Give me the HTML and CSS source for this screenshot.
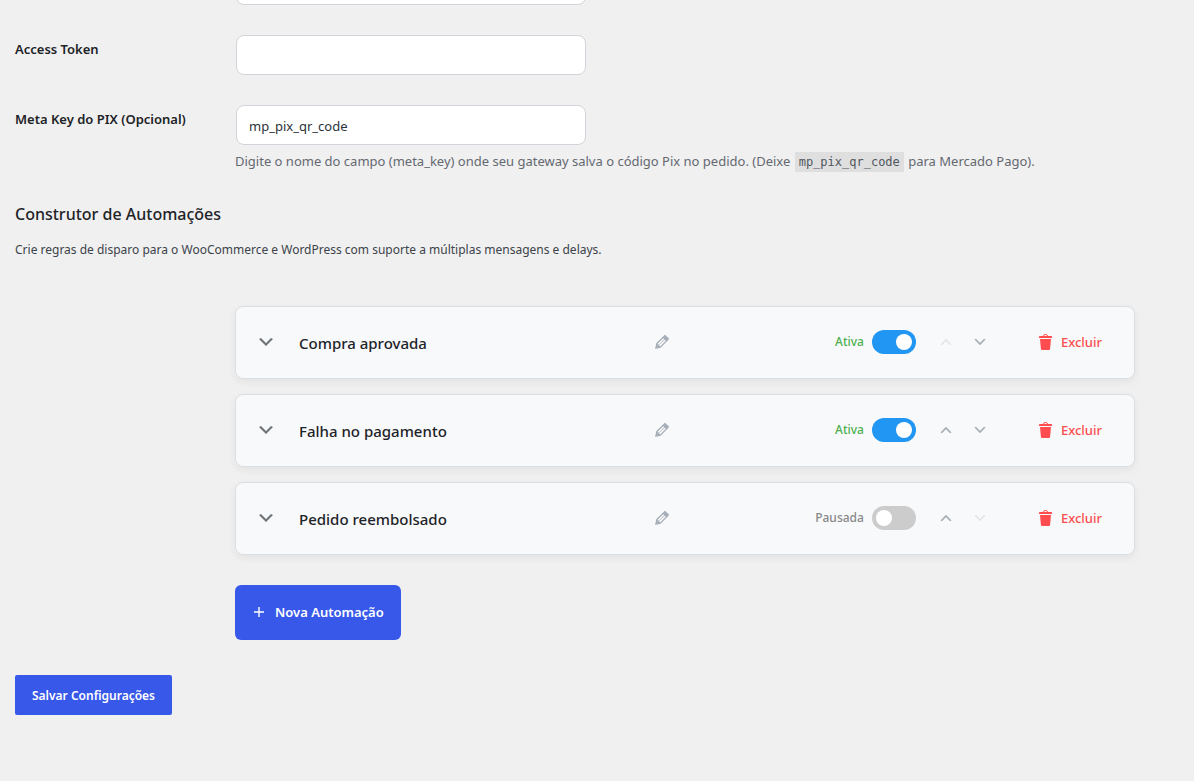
FILE: index.html
```html
<!DOCTYPE html>
<html lang="pt-BR">
<head>
    <meta charset="UTF-8">
    <meta name="viewport" content="width=device-width, initial-scale=1.0">
    <title>Configurações</title>
    <link rel="stylesheet" href="styles.css">
</head>
<body>

    <!-- Shared icons -->
    <svg class="icon-defs" aria-hidden="true">
        <symbol id="icon-down" viewBox="0 0 20 20">
            <path d="M5 6l5 5 5-5 2 1-7 7-7-7z"/>
        </symbol>
        <symbol id="icon-up" viewBox="0 0 20 20">
            <path d="M15 14l-5-5-5 5-2-1 7-7 7 7z"/>
        </symbol>
        <symbol id="icon-edit" viewBox="0 0 20 20">
            <path d="M13.89 3.39l2.71 2.72c.46.46.42 1.24.03 1.64l-8.01 8.02-5.56 1.16 1.16-5.58s7.6-7.63 7.99-8.03c.39-.39 1.22-.39 1.68.07zm-2.73 2.79l-5.59 5.61 1.11 1.11 5.54-5.65zm-2.97 8.23l5.58-5.6-1.07-1.08-5.59 5.6z"/>
        </symbol>
        <symbol id="icon-trash" viewBox="0 0 20 20">
            <path d="M12 4h3c.6 0 1 .4 1 1v1H3V5c0-.6.5-1 1-1h3c.2-1.1 1.3-2 2.5-2s2.300.9 2.500 2zM8 4h3c-.2-.6-.9-1-1.500-1S8.200 3.400 8 4zM4 7h11l-.9 10.100c0 .5-.5.9-1 .9H5.900c-.5 0-.9-.4-1-.9L4 7z"/>
        </symbol>
        <symbol id="icon-plus" viewBox="0 0 20 20">
            <path d="M9.300 5h1.400v4.300H15v1.400h-4.300V15H9.300v-4.300H5V9.300h4.300z"/>
        </symbol>
    </svg>

    <form class="settings">
        <div class="form-row">
            <span></span>
            <input class="text-input" type="text" aria-label="ID">
        </div>
        <div class="form-row">
            <label for="accessToken">Access Token</label>
            <input class="text-input" type="text" id="accessToken">
        </div>
        <div class="form-row">
            <label for="metaKey">Meta Key do PIX (Opcional)</label>
            <div>
                <input class="text-input" type="text" id="metaKey" value="mp_pix_qr_code">
                <p class="description">Digite o nome do campo (meta_key) onde seu gateway salva o código Pix no pedido. (Deixe <code>mp_pix_qr_code</code> para Mercado Pago).</p>
            </div>
        </div>

        <h2>Construtor de Automações</h2>
        <p class="intro">Crie regras de disparo para o WooCommerce e WordPress com suporte a múltiplas mensagens e delays.</p>

        <!-- Automations -->
        <div class="automations">
            <div class="card">
                <button type="button" class="icon-button toggle-card" aria-label="Expandir"><svg><use href="#icon-down"/></svg></button>
                <div class="card-name">
                    <h3>Compra aprovada</h3>
                    <button type="button" class="icon-button" aria-label="Editar nome"><svg><use href="#icon-edit"/></svg></button>
                </div>
                <div class="card-actions">
                    <label class="status active">Ativa <input type="checkbox" class="switch" checked></label>
                    <div class="order">
                        <button type="button" class="icon-button" aria-label="Mover para cima" disabled><svg><use href="#icon-up"/></svg></button>
                        <button type="button" class="icon-button" aria-label="Mover para baixo"><svg><use href="#icon-down"/></svg></button>
                    </div>
                    <button type="button" class="delete"><svg><use href="#icon-trash"/></svg>Excluir</button>
                </div>
            </div>

            <div class="card">
                <button type="button" class="icon-button toggle-card" aria-label="Expandir"><svg><use href="#icon-down"/></svg></button>
                <div class="card-name">
                    <h3>Falha no pagamento</h3>
                    <button type="button" class="icon-button" aria-label="Editar nome"><svg><use href="#icon-edit"/></svg></button>
                </div>
                <div class="card-actions">
                    <label class="status active">Ativa <input type="checkbox" class="switch" checked></label>
                    <div class="order">
                        <button type="button" class="icon-button" aria-label="Mover para cima"><svg><use href="#icon-up"/></svg></button>
                        <button type="button" class="icon-button" aria-label="Mover para baixo"><svg><use href="#icon-down"/></svg></button>
                    </div>
                    <button type="button" class="delete"><svg><use href="#icon-trash"/></svg>Excluir</button>
                </div>
            </div>

            <div class="card">
                <button type="button" class="icon-button toggle-card" aria-label="Expandir"><svg><use href="#icon-down"/></svg></button>
                <div class="card-name">
                    <h3>Pedido reembolsado</h3>
                    <button type="button" class="icon-button" aria-label="Editar nome"><svg><use href="#icon-edit"/></svg></button>
                </div>
                <div class="card-actions">
                    <label class="status">Pausada <input type="checkbox" class="switch"></label>
                    <div class="order">
                        <button type="button" class="icon-button" aria-label="Mover para cima"><svg><use href="#icon-up"/></svg></button>
                        <button type="button" class="icon-button" aria-label="Mover para baixo" disabled><svg><use href="#icon-down"/></svg></button>
                    </div>
                    <button type="button" class="delete"><svg><use href="#icon-trash"/></svg>Excluir</button>
                </div>
            </div>

            <button type="button" class="primary add-button"><svg><use href="#icon-plus"/></svg>Nova Automação</button>
        </div>

        <button type="submit" class="primary save-button">Salvar Configurações</button>
    </form>

</body>
</html>
```
FILE: styles.css
```css
* {
    box-sizing: border-box;
}

body {
    font-family: "Noto Sans", "Open Sans", sans-serif;
    font-size: 13px;
    margin: 0;
    background: #f0f0f0;
    color: #3c434a;
    overflow: hidden;
}

h2, h3, p {
    margin: 0;
}

button {
    font-family: inherit;
    border: none;
    cursor: pointer;
}

svg {
    width: 20px;
    height: 20px;
    fill: currentColor;
    flex-shrink: 0;
}

.icon-defs {
    display: none;
}

.settings {
    margin-top: -35px;
    padding: 0 15px;
}

.form-row {
    display: grid;
    grid-template-columns: 220px 1fr;
    margin-bottom: 30px;
}

.form-row label {
    padding-top: 5px;
    line-height: 18px;
    font-weight: 600;
    color: #1d2327;
}

.text-input {
    display: block;
    width: 350px;
    max-width: 100%;
    height: 40px;
    margin-left: 1px;
    padding: 2px 12px 0;
    border: 1px solid #d1d5db;
    border-radius: 8px;
    background: #fff;
    color: #2c3338;
    font: inherit;
}

.description {
    margin-top: 6px;
    line-height: 21px;
    color: #646970;
}

.description code {
    display: inline-block;
    margin: 0 1px;
    padding: 0 4px;
    background: #dfdfdf;
    color: #50575e;
    font-family: "DejaVu Sans Mono", monospace;
    font-size: 12px;
    line-height: 20px;
}

h2 {
    font-size: 16px;
    font-weight: 500;
    line-height: 24px;
    color: #1d2327;
}

.intro {
    margin-top: 14px;
    font-size: 12px;
    line-height: 20px;
}

.automations {
    max-width: 1120px;
    margin-top: 46px;
    padding-left: 220px;
}

.card {
    display: flex;
    align-items: center;
    height: 73px;
    margin-bottom: 15px;
    padding: 0 24px 2px 20px;
    border: 1px solid #dcdfe2;
    border-radius: 8px;
    background: #f8f9fb;
    box-shadow: 0 3px 8px rgba(0, 0, 0, 0.06);
}

.icon-button {
    display: flex;
    padding: 0;
    background: none;
    color: #a7b0b8;
}

.icon-button:disabled {
    color: #e3e5e8;
}

.toggle-card {
    color: #6f7479;
}

.card-name {
    display: flex;
    align-items: center;
    justify-content: space-between;
    flex: 0 1 373px;
    margin-left: 23px;
}

h3 {
    padding-top: 2px;
    font-size: 15px;
    font-weight: 500;
    color: #1d2327;
}

.card-actions {
    display: flex;
    align-items: center;
    margin-left: auto;
}

.status {
    display: flex;
    align-items: center;
    gap: 8px;
    font-size: 12px;
    font-weight: 500;
    color: #888;
}

.status.active {
    color: #4caf50;
}

.switch {
    appearance: none;
    display: flex;
    align-items: center;
    width: 44px;
    height: 24px;
    margin: 0;
    padding: 4px;
    border-radius: 12px;
    background: #ccc;
}

.switch::before {
    content: "";
    width: 16px;
    height: 16px;
    border-radius: 50%;
    background: #fff;
}

.switch:checked {
    justify-content: flex-end;
    background: #2196f3;
}

.order {
    display: flex;
    gap: 18px;
    margin-left: 22px;
}

.order svg {
    width: 16px;
    height: 16px;
}

.delete {
    display: flex;
    align-items: center;
    gap: 5px;
    margin-left: 40px;
    padding: 0 8px;
    background: none;
    color: #ff4d4f;
    font-size: 13px;
    font-weight: 500;
}

.primary {
    background: #3858e9;
    color: #fff;
    font-size: 13px;
    font-weight: 600;
}

.add-button {
    display: flex;
    align-items: center;
    gap: 6px;
    height: 55px;
    margin-top: 30px;
    padding: 0 17px 2px 14px;
    border-radius: 6px;
}

.save-button {
    height: 40px;
    margin-top: 35px;
    padding: 0 17px;
    border-radius: 2px;
    font-size: 12px;
}
```
